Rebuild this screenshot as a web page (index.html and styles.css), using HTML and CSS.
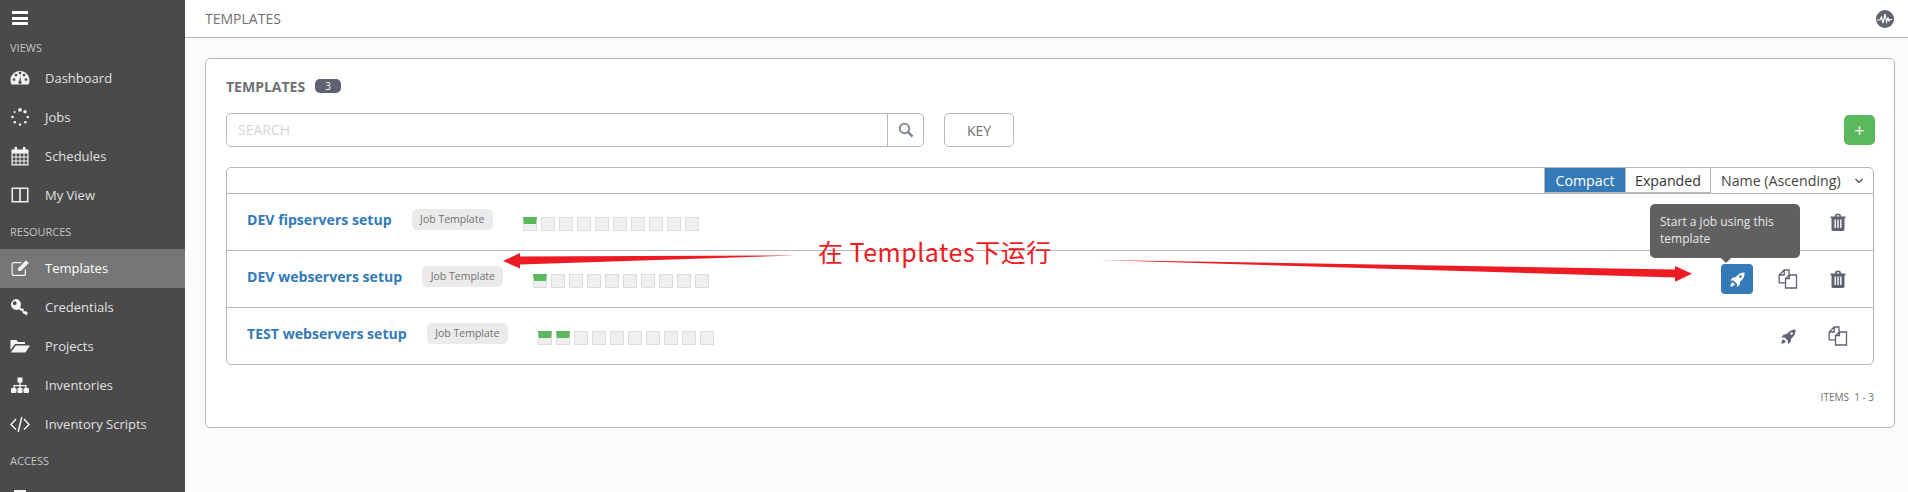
FILE: index.html
```html
<!DOCTYPE html>
<html lang="en">
<head>
  <meta charset="UTF-8" />
  <title>Templates</title>
  <link rel="stylesheet" href="styles.css">
</head>
<body>
<svg width="0" height="0" class="defs">
  <defs>
    <symbol id="i-rocket" viewBox="0 0 20 20">
      <path d="M19.500.5C14.500.5 10.500 2.500 7.800 6.800L3.300 7.600.5 11.300h4.300l4.400 4.400v4.300l3.700-2.800.8-4.500C17.500 9.800 19.500 5.500 19.500.5zM14 4.300a1.800 1.800 0 1 1 0 3.600 1.800 1.800 0 0 1 0-3.600z" fill-rule="evenodd"/>
      <path d="M3.600 13.600l2.800 2.800C5.500 18.600 2.800 19.500.6 19.400.5 17.200 1.400 14.500 3.600 13.600z"/>
    </symbol>
    <symbol id="i-copy" viewBox="0 0 20 20">
      <path d="M7 13.800H1.200V6l5-5h4.800v5M6.200 1v5H1.200M7.500 19V9.500L11.500 6h7v13zM11.500 6v3.500h-4" fill="none" stroke="currentColor" stroke-width="1.300"/>
    </symbol>
    <symbol id="i-trash" viewBox="0 0 20 20">
      <path d="M2.500 4.500h15v1.800h-1v11c0 1-.7 1.700-1.600 1.700H5.100c-.9 0-1.600-.7-1.600-1.700v-11h-1zM6.800 4.500l1-2.800h4.400l1 2.800h-1.700l-.6-1.300H9.100l-.6 1.300zM6.500 7.500v8.500h1.400V7.500zM9.300 7.500v8.500h1.400V7.500zM12.100 7.500v8.500h1.400V7.500z" fill-rule="evenodd"/>
    </symbol>
  </defs>
</svg>

<div class="app">
  <nav class="sidebar">
    <div class="burger"><span></span><span></span><span></span></div>
    <div class="nav-label nav-label-first">VIEWS</div>
    <a class="nav-item">
      <svg class="nav-icon" viewBox="0 0 20 20"><path d="M10 3C4.500 3 .5 7.300.5 12.500c0 1.500.3 2.800 1 4h17c.7-1.200 1-2.500 1-4C19.500 7.300 15.500 3 10 3zM4 13a1.400 1.400 0 1 1 0-2.800A1.400 1.400 0 0 1 4 13zm2-4.500a1.400 1.400 0 1 1 0-2.800 1.400 1.400 0 0 1 0 2.800zm4-2a1.400 1.400 0 1 1 0-2.800 1.400 1.400 0 0 1 0 2.800zm1.500 8.800a1.800 1.800 0 0 1-3 0c-.4-.8 0-1.600.6-2L10.500 7l.3 6.300c.7.400 1 1.200.7 2zM14 8.500a1.400 1.400 0 1 1 0-2.800 1.400 1.400 0 0 1 0 2.800zm2 4.500a1.400 1.400 0 1 1 0-2.800 1.400 1.400 0 0 1 0 2.800z" fill-rule="evenodd"/></svg>
      Dashboard
    </a>
    <a class="nav-item">
      <svg class="nav-icon" viewBox="0 0 20 20"><circle cx="10" cy="2.800" r="1.900"/><circle cx="15" cy="4.800" r="1.700"/><circle cx="17.800" cy="10" r="1.300"/><circle cx="15.300" cy="15.200" r="1.200"/><circle cx="10" cy="17.500" r="1.200"/><circle cx="4.800" cy="15.200" r="1.200"/><circle cx="2.500" cy="10" r="1.300"/><circle cx="4.600" cy="5" r="1"/></svg>
      Jobs
    </a>
    <a class="nav-item">
      <svg class="nav-icon" viewBox="0 0 20 20"><path d="M1.500 3.500h3V2a1.300 1.300 0 0 1 2.600 0v1.500h5.800V2a1.300 1.300 0 0 1 2.600 0v1.500h3v16h-17zM2.700 7.500v3h2.800v-3zm3.800 0v3h3v-3zm4 0v3h3v-3zm4 0v3h2.800v-3zM2.700 11.500v3h2.800v-3zm3.800 0v3h3v-3zm4 0v3h3v-3zm4 0v3h2.800v-3zM2.700 15.500v2.800h2.800v-2.800zm3.800 0v2.800h3v-2.800zm4 0v2.800h3v-2.800zm4 0v2.800h2.800v-2.800z" fill-rule="evenodd"/></svg>
      Schedules
    </a>
    <a class="nav-item">
      <svg class="nav-icon" viewBox="0 0 20 20"><path d="M1.500 2.500h17v15h-17zM3 4v12h6.200V4zm7.800 0v12H17V4z" fill-rule="evenodd"/></svg>
      My View
    </a>
    <div class="nav-label">RESOURCES</div>
    <a class="nav-item active">
      <svg class="nav-icon" viewBox="0 0 20 20"><path d="M16 11v5a2 2 0 0 1-2 2H3.500a2 2 0 0 1-2-2V6a2 2 0 0 1 2-2H12l-1.300 1.300H3.500a.8.800 0 0 0-.8.800v10c0 .4.400.7.800.7H14c.4 0 .7-.3.700-.7v-3.800zM8 10.200L16 2.200l2.800 2.800-8 8H8z" fill-rule="evenodd"/></svg>
      Templates
    </a>
    <a class="nav-item">
      <svg class="nav-icon" viewBox="0 0 20 20"><path d="M6.500 2a5.500 5.500 0 1 0 2.700 10.300l1.800 1.800h1.500v1.500l1.500 1.500 1.500.1v1.300l1.800-.9.200-2.500-1-.1-.6-1.300-1.400.8-1.200-1.300.6-1-1.200-.9-.9.700-1.700-1.700A5.500 5.500 0 0 0 6.500 2zM4.700 4.300a1.900 1.900 0 1 1 0 3.800 1.900 1.900 0 0 1 0-3.800z" fill-rule="evenodd"/></svg>
      Credentials
    </a>
    <a class="nav-item">
      <svg class="nav-icon" viewBox="0 0 20 20"><path d="M.5 4h6l1.500 2h7v2H5L.5 14zM5.800 9.500H20L15.500 16.500H.8z"/></svg>
      Projects
    </a>
    <a class="nav-item">
      <svg class="nav-icon" viewBox="0 0 20 20"><path d="M7.500 2.500h5v5h-1.800v2.400h5.800v3.100H18a1 1 0 0 1 1 1V17a1 1 0 0 1-1 1h-3.500a1 1 0 0 1-1-1v-3a1 1 0 0 1 1-1h.6v-1.700h-4.400V13h.8a1 1 0 0 1 1 1v3a1 1 0 0 1-1 1H8.500a1 1 0 0 1-1-1v-3a1 1 0 0 1 1-1h.8v-1.700H4.900V13h.6a1 1 0 0 1 1 1v3a1 1 0 0 1-1 1H2a1 1 0 0 1-1-1v-3a1 1 0 0 1 1-1h1.500V9.900h5.800V7.500H7.500z"/></svg>
      Inventories
    </a>
    <a class="nav-item">
      <svg class="nav-icon nav-icon-line" viewBox="0 0 20 20"><path d="M6 5L1 10.500 6 15.500M14 5l5 5.500-5 5M11.800 3L8.200 18" fill="none" stroke="currentColor" stroke-width="1.500"/></svg>
      Inventory Scripts
    </a>
    <div class="nav-label">ACCESS</div>
    <a class="nav-item nav-item-last">
      <svg class="nav-icon" viewBox="0 0 20 20"><path d="M4 3h12v14H4z"/></svg>
    </a>
  </nav>

  <div class="content">
    <header class="topbar">
      <span class="crumb">TEMPLATES</span>
      <svg class="activity" viewBox="0 0 18 18">
        <circle cx="9" cy="9" r="9"/>
        <path d="M1 10h3l1.500-3 1.500 6 2-9 1.500 8 1.500-4 1 3 1-1.500h2" fill="none" stroke="#fff" stroke-width="1.200"/>
      </svg>
    </header>

    <main class="main">
      <section class="panel">
        <h2 class="panel-title">TEMPLATES <span class="count">3</span></h2>

        <div class="toolbar">
          <div class="search">
            <span class="search-text">SEARCH</span>
            <span class="search-btn">
              <svg viewBox="0 0 16 16" width="16" height="16"><circle cx="6.500" cy="6.500" r="4.700" fill="none" stroke="currentColor" stroke-width="2"/><path d="M10 10l4.500 4.500" stroke="currentColor" stroke-width="2.600"/></svg>
            </span>
          </div>
          <button class="key-btn">KEY</button>
          <button class="add-btn">+</button>
        </div>

        <div class="list">
          <div class="list-head">
            <span class="toggle toggle-on">Compact</span>
            <span class="toggle">Expanded</span>
            <span class="sort">Name (Ascending)
              <svg viewBox="0 0 10 10" width="10" height="10"><path d="M1.500 3l3.500 3.500L8.500 3" fill="none" stroke="currentColor" stroke-width="1.100"/></svg>
            </span>
          </div>

          <div class="row">
            <a class="name">DEV fipservers setup</a>
            <span class="badge">Job Template</span>
            <div class="jobs"><i class="ok"></i><i></i><i></i><i></i><i></i><i></i><i></i><i></i><i></i><i></i></div>
            <div class="actions">
              <span class="act act-trash"><svg><use href="#i-trash"/></svg></span>
            </div>
          </div>

          <div class="row">
            <a class="name">DEV webservers setup</a>
            <span class="badge">Job Template</span>
            <div class="jobs"><i class="ok"></i><i></i><i></i><i></i><i></i><i></i><i></i><i></i><i></i><i></i></div>
            <div class="actions">
              <span class="act act-run">
                <svg><use href="#i-rocket"/></svg>
                <span class="tooltip">Start a job using this template</span>
              </span>
              <span class="act act-copy"><svg><use href="#i-copy"/></svg></span>
              <span class="act act-trash"><svg><use href="#i-trash"/></svg></span>
            </div>
          </div>

          <div class="row">
            <a class="name">TEST webservers setup</a>
            <span class="badge">Job Template</span>
            <div class="jobs"><i class="ok"></i><i class="ok"></i><i></i><i></i><i></i><i></i><i></i><i></i><i></i><i></i></div>
            <div class="actions">
              <span class="act act-rocket"><svg><use href="#i-rocket"/></svg></span>
              <span class="act act-copy"><svg><use href="#i-copy"/></svg></span>
            </div>
          </div>
        </div>

        <div class="items">ITEMS &nbsp;1 - 3</div>
      </section>
    </main>
  </div>
</div>

<!-- red notes drawn on top of the screenshot -->
<svg class="arrows" viewBox="0 0 1908 492">
  <path d="M796 255.500L520 256.500 520 253 503 261 520 268.500 520 264.500z"/>
  <path d="M1098 260L1675 269.500 1675 266 1692 273.700 1675 281.700 1675 277.500z"/>
</svg>
<div class="note">在 Templates下运行</div>
</body>
</html>
```

FILE: styles.css
```css
html, body {
  margin: 0;
  padding: 0;
  height: 492px;
  overflow: hidden;
  font-family: "Open Sans", "Noto Sans", sans-serif;
  color: #333;
}

.defs {
  position: absolute;
}

.app {
  display: flex;
  height: 492px;
}

/* sidebar */
.sidebar {
  flex: 0 0 185px;
  height: 492px;
  background-color: #4a4a4a;
  color: #e0e0e0;
  overflow: hidden;
}

.burger {
  height: 37px;
  padding: 11px 0 0 12px;
  box-sizing: border-box;
}

.burger span {
  display: block;
  width: 16px;
  height: 3px;
  margin-bottom: 2.500px;
  background-color: #fff;
}

.nav-label {
  height: 34px;
  box-sizing: border-box;
  padding: 0 0 1px 10px;
  display: flex;
  align-items: center;
  font-size: 11px;
  color: #c4c4c4;
}

.nav-label-first {
  height: 22px;
}

.nav-item {
  height: 39px;
  box-sizing: border-box;
  display: flex;
  align-items: center;
  gap: 15px;
  padding: 0 0 1px 10px;
  font-size: 13px;
}

.nav-item.active {
  background-color: #767676;
  color: #fff;
}

.nav-icon {
  width: 20px;
  height: 20px;
  fill: #f4f4f4;
  color: #f4f4f4;
}

/* content */
.content {
  flex: 1;
  display: flex;
  flex-direction: column;
  background-color: #fbfbfb;
}

.topbar {
  height: 38px;
  box-sizing: border-box;
  display: flex;
  align-items: center;
  justify-content: space-between;
  padding: 0 14px 0 20px;
  background-color: #fff;
  border-bottom: 1px solid #b7b7b7;
}

.crumb {
  margin-bottom: 1px;
  font-size: 14px;
  color: #707070;
}

.activity {
  width: 18px;
  height: 18px;
  fill: #5f6270;
}

.main {
  padding: 20px 13px 0 20px;
}

.panel {
  box-sizing: border-box;
  height: 370px;
  padding: 15px 20px 20px;
  background-color: #fff;
  border: 1px solid #b7b7b7;
  border-radius: 5px;
}

.panel-title {
  margin: 0;
  height: 24px;
  display: flex;
  align-items: center;
  gap: 10px;
  font-size: 14px;
  font-weight: 700;
  color: #707070;
}

.count {
  padding: 0 10px;
  height: 14px;
  line-height: 14px;
  border-radius: 5px;
  background-color: #5f6270;
  color: #fff;
  font-size: 10px;
  font-weight: 400;
}

.toolbar {
  display: flex;
  align-items: center;
  margin-top: 15px;
  height: 34px;
}

.search {
  box-sizing: border-box;
  width: 698px;
  height: 34px;
  display: flex;
  align-items: center;
  justify-content: space-between;
  border: 1px solid #b7b7b7;
  border-radius: 5px;
}

.search-text {
  padding: 0 0 2px 11px;
  font-size: 14px;
  color: #d4d4d4;
}

.search-btn {
  width: 35px;
  height: 100%;
  display: flex;
  align-items: center;
  justify-content: center;
  border-left: 1px solid #b7b7b7;
  color: #848992;
}

.key-btn {
  box-sizing: border-box;
  width: 70px;
  height: 34px;
  margin-left: 20px;
  background-color: #fff;
  border: 1px solid #b7b7b7;
  border-radius: 5px;
  font: 14px "Open Sans", sans-serif;
  color: #707070;
}

.add-btn {
  width: 31px;
  height: 30px;
  margin-left: auto;
  margin-right: -1px;
  padding: 0;
  border: none;
  border-radius: 5px;
  background-color: #5cb85c;
  color: #fff;
  font: 18px "Open Sans", sans-serif;
}

/* list */
.list {
  margin-top: 20px;
  border: 1px solid #b7b7b7;
  border-radius: 5px;
}

.list-head {
  height: 25px;
  display: flex;
  justify-content: flex-end;
  align-items: stretch;
  font-size: 14.200px;
}

.toggle {
  width: 80px;
  display: flex;
  align-items: center;
  justify-content: center;
  border-left: 1px solid #b7b7b7;
  border-bottom: 1px solid #b7b7b7;
  color: #333;
}

.toggle + .toggle {
  width: 84px;
}

.toggle-on {
  background-color: #337ab7;
  color: #fff;
}

.sort {
  width: 163px;
  box-sizing: border-box;
  display: flex;
  align-items: center;
  justify-content: space-between;
  padding: 0 9px 0 10px;
  border-left: 1px solid #b7b7b7;
  color: #444;
}

.row {
  height: 57px;
  box-sizing: border-box;
  display: flex;
  align-items: center;
  padding-left: 20px;
  border-top: 1px solid #b7b7b7;
}

.name {
  margin-bottom: 5px;
  font-size: 14.100px;
  font-weight: 700;
  color: #337ab7;
}

.badge {
  margin: 0 0 5px 20px;
  padding: 0 8.500px;
  height: 21px;
  line-height: 21px;
  border-radius: 5px;
  background-color: #ebebeb;
  font-size: 10.500px;
  color: #707070;
}

.jobs {
  display: flex;
  gap: 4px;
  margin-left: 30px;
  margin-top: 4px;
}

.jobs i {
  box-sizing: border-box;
  width: 14px;
  height: 14px;
  background-color: #f0f0f0;
  border: 1px solid #dcdcdc;
}

.jobs i.ok {
  border: 1px solid #dcdcdc;
  border-top: 7px solid #5cb85c;
}

.actions {
  margin-left: auto;
  display: flex;
  align-items: center;
  justify-content: flex-end;
  gap: 18px;
  padding-right: 19px;
}

.act {
  position: relative;
  width: 32px;
  height: 30px;
  display: flex;
  align-items: center;
  justify-content: center;
  color: #5f6270;
  fill: #5f6270;
}

.act svg {
  width: 20px;
  height: 20px;
}

.act-run {
  margin-right: 1px;
  border-radius: 4px;
  background-color: #337ab7;
  color: #fff;
  fill: #fff;
}

.act-run svg,
.act-rocket svg {
  width: 15px;
  height: 15px;
}

.tooltip {
  position: absolute;
  left: -71px;
  bottom: 36px;
  box-sizing: border-box;
  width: 150px;
  height: 54px;
  padding: 9px 10px;
  border-radius: 5px;
  background-color: #606060;
  color: #e8e8e8;
  font-size: 12px;
  line-height: 17px;
}

.tooltip::after {
  content: "";
  position: absolute;
  left: 71px;
  bottom: -5px;
  border-left: 5px solid transparent;
  border-right: 5px solid transparent;
  border-top: 5px solid #606060;
}

.items {
  margin-top: 25px;
  text-align: right;
  font-size: 10px;
  color: #707070;
}

/* red notes */
.arrows {
  position: absolute;
  left: 0;
  top: 0;
  width: 1908px;
  height: 492px;
  fill: #ed1c24;
  pointer-events: none;
}

.note {
  position: absolute;
  left: 818px;
  top: 234px;
  font-family: "Noto Sans CJK SC", "Noto Sans", sans-serif;
  font-size: 25px;
  letter-spacing: 0.500px;
  line-height: 34px;
  color: #ed1c24;
  white-space: nowrap;
}
```
